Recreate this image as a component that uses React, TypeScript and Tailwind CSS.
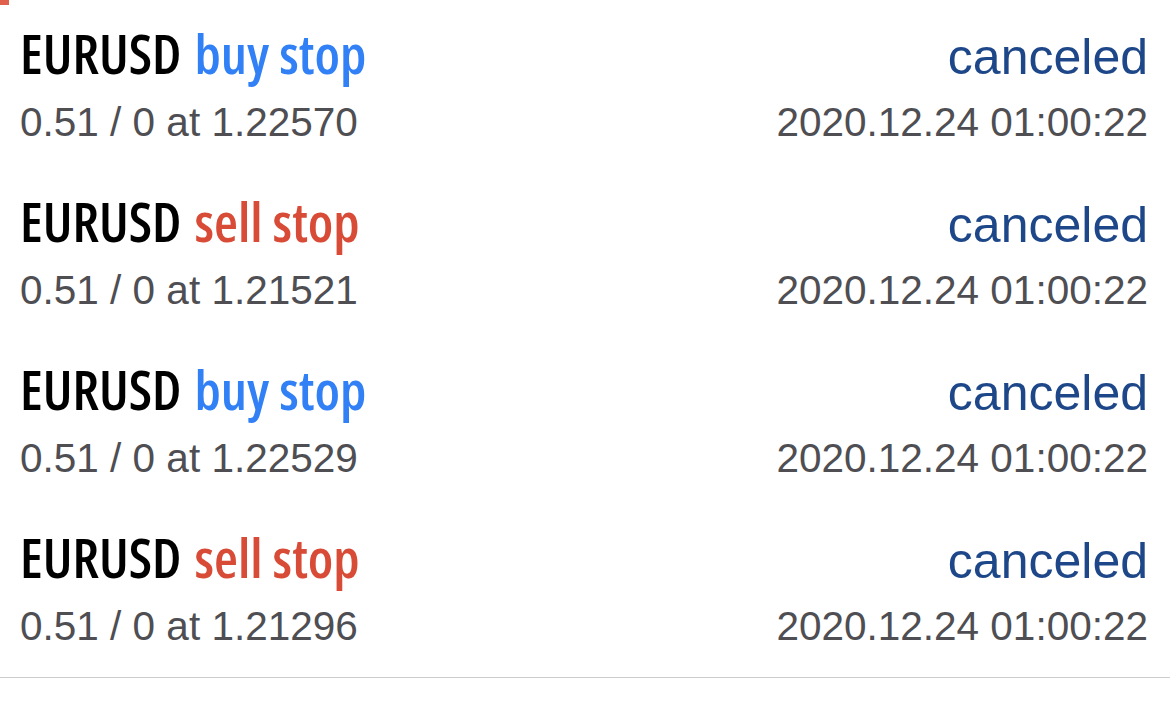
const orders = [
    { id: 1, symbol: 'EURUSD', type: 'buy stop', volume: '0.51 / 0', price: '1.22570', status: 'canceled', time: '2020.12.24 01:00:22' },
    { id: 2, symbol: 'EURUSD', type: 'sell stop', volume: '0.51 / 0', price: '1.21521', status: 'canceled', time: '2020.12.24 01:00:22' },
    { id: 3, symbol: 'EURUSD', type: 'buy stop', volume: '0.51 / 0', price: '1.22529', status: 'canceled', time: '2020.12.24 01:00:22' },
    { id: 4, symbol: 'EURUSD', type: 'sell stop', volume: '0.51 / 0', price: '1.21296', status: 'canceled', time: '2020.12.24 01:00:22' }
];

const App = () => {
    return (
        <div className="min-h-screen w-[1170px] bg-white font-[family-name:'Liberation_Sans',Arial,sans-serif]">
            {/* tab indicator peeking from above */}
            <div className="h-[5px] w-[9px] bg-[#df604c]" />

            <div>
                {orders.map((order) => (
                    <div key={order.id} className="h-[168px] pt-[18px] pl-[20px] pr-[22px]">
                        <div className="flex items-baseline justify-between">
                            <span className="font-[family-name:'Open_Sans',sans-serif] font-stretch-condensed text-[55px] leading-[60px] font-semibold text-black">
                                {order.symbol}
                                <span className={`ml-[13px] ${order.type.startsWith('buy') ? 'text-[#3280f5]' : 'text-[#d84b37]'}`}>
                                    {order.type}
                                </span>
                            </span>
                            <span className="text-[50px] leading-[60px] text-[#1d4788]">{order.status}</span>
                        </div>
                        <div className="mt-[11px] flex items-baseline justify-between text-[40.5px] leading-[48px] text-[#4e4e53]">
                            <span>{order.volume} at {order.price}</span>
                            <span>{order.time}</span>
                        </div>
                    </div>
                ))}
            </div>

            <div className="h-px w-full bg-[#cccccc]" />
        </div>
    );
};

export default App;
